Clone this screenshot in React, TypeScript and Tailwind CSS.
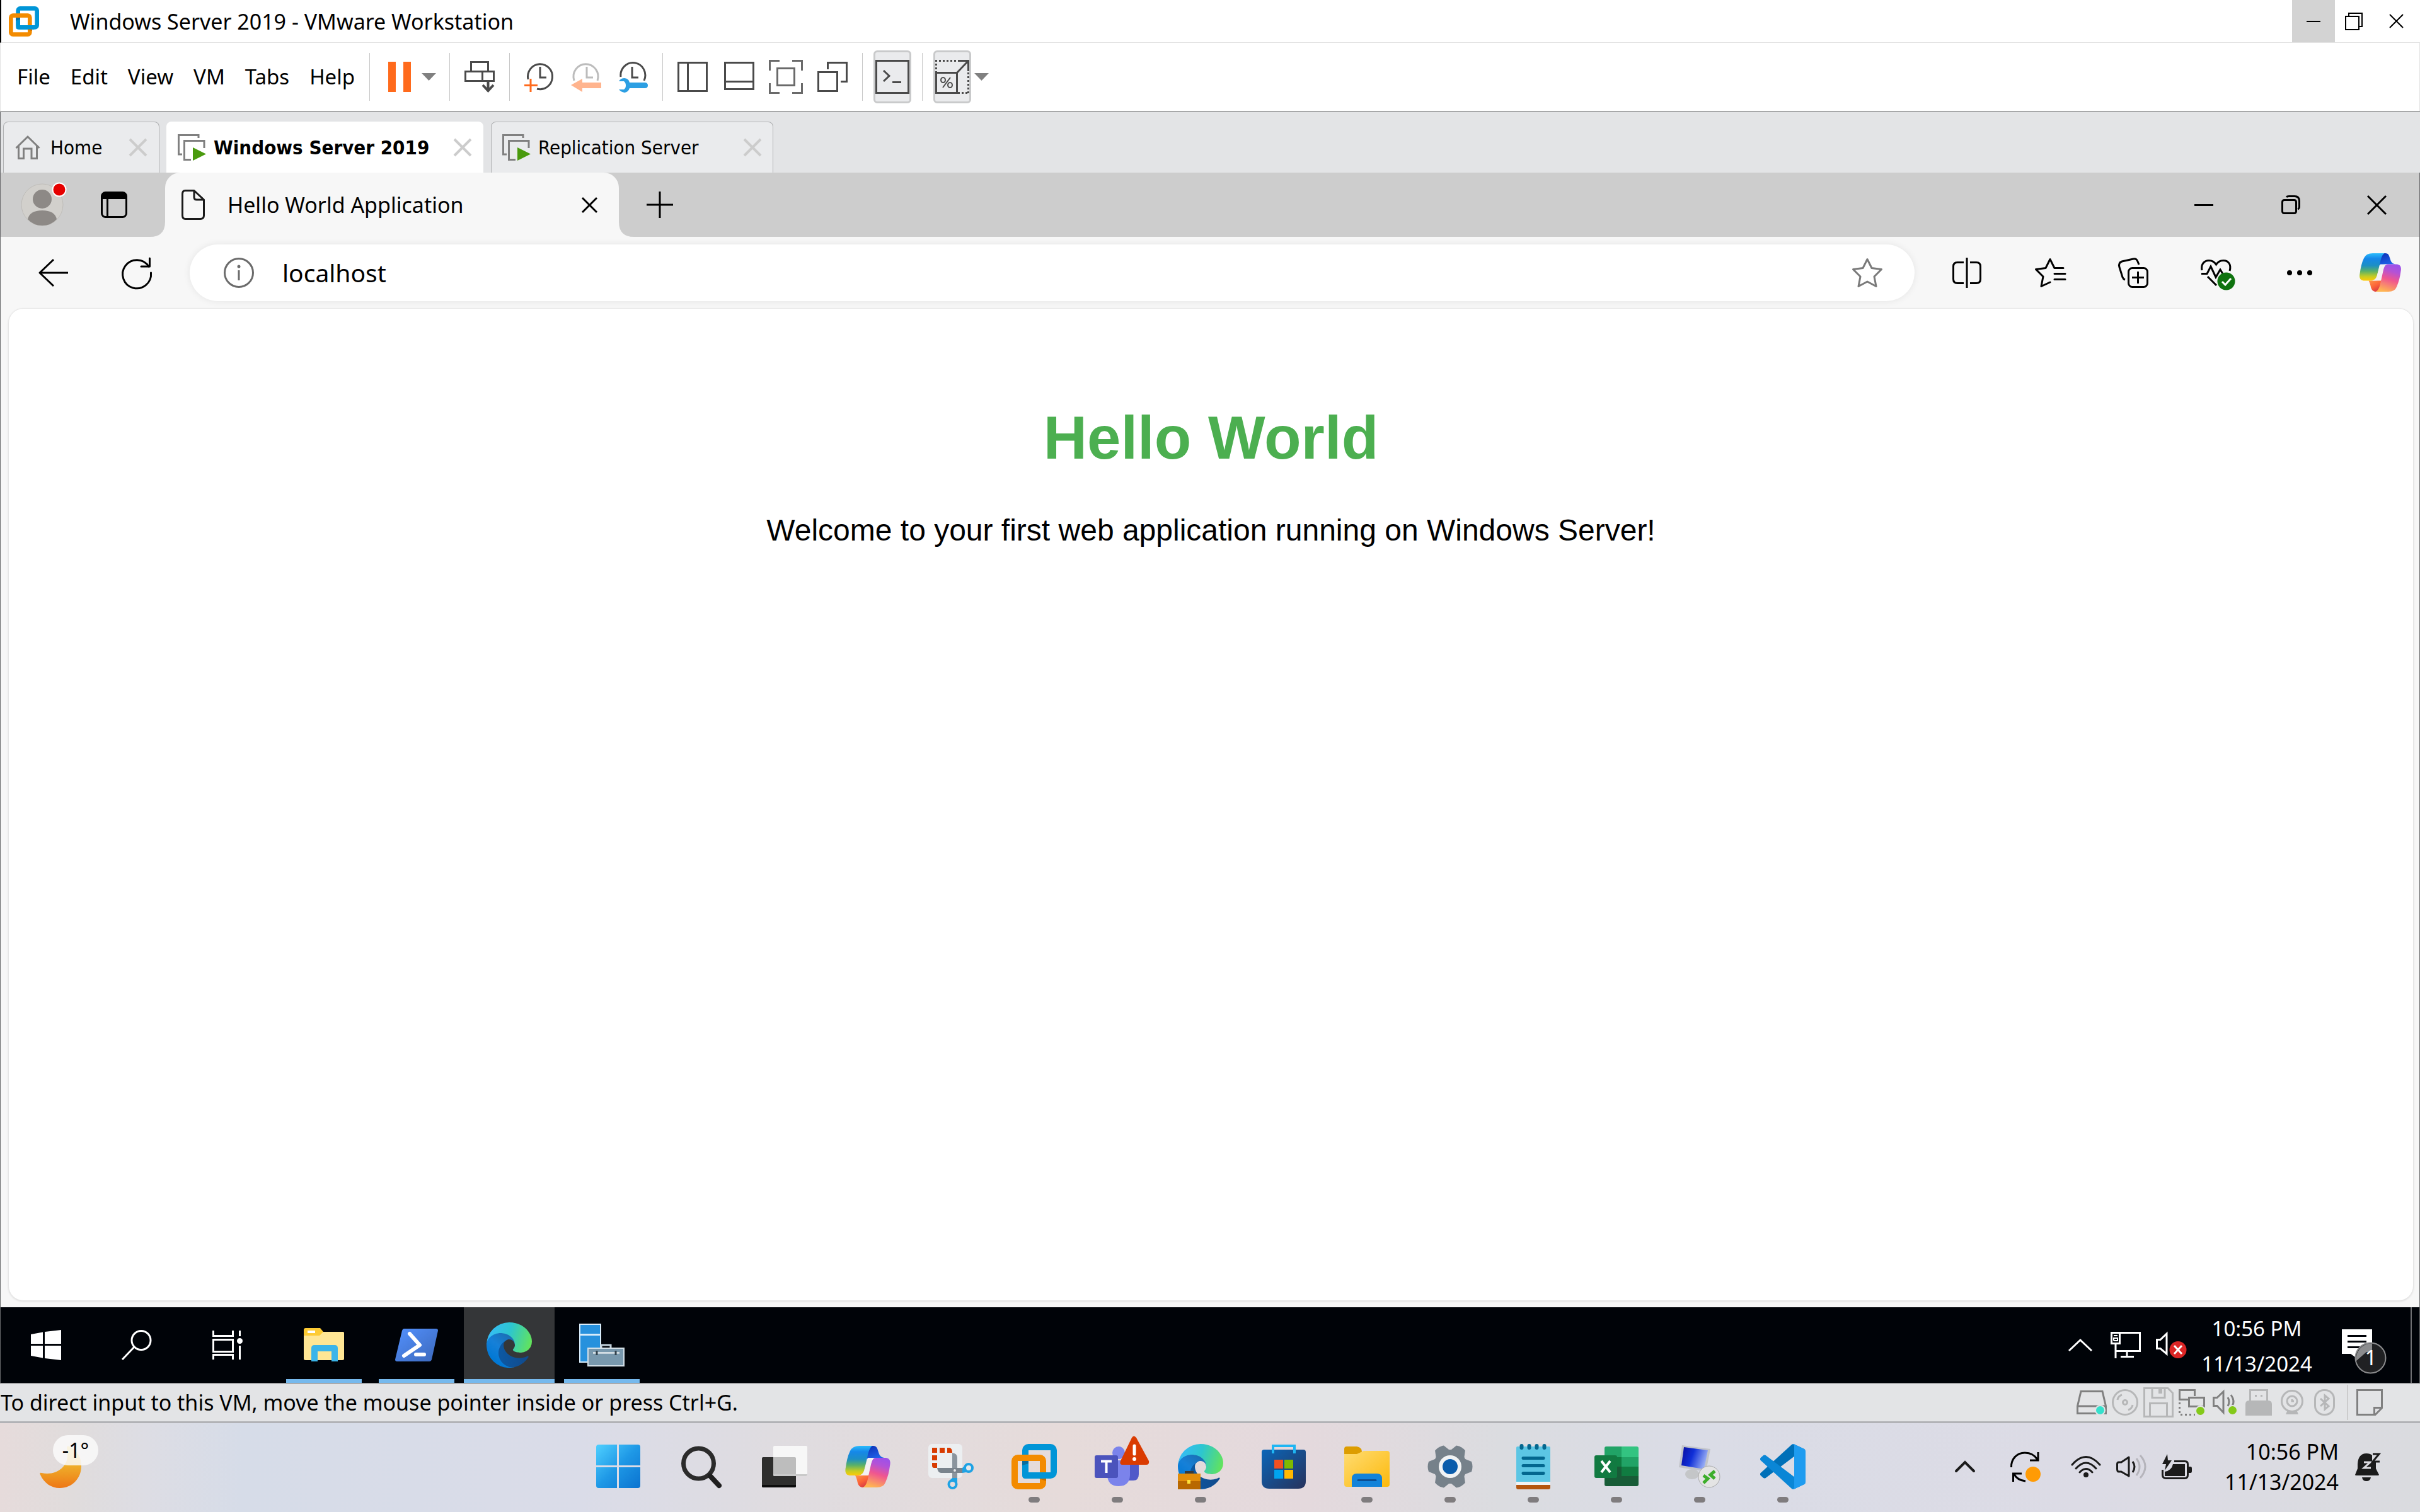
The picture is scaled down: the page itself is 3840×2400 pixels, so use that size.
import type { ReactNode } from "react";

const UI = "font-['Noto_Sans','Open_Sans',sans-serif]";

type IconProps = { w: number; h: number; children: ReactNode; className?: string };

function Icon({ w, h, children, className = "" }: IconProps) {
  return (
    <svg
      width={w}
      height={h}
      viewBox={`0 0 ${w} ${h}`}
      fill="none"
      aria-hidden="true"
      className={`shrink-0 overflow-visible ${className}`}
    >
      {children}
    </svg>
  );
}

/* ---------- shared logos ---------- */

function VmwareLogo({ size }: { size: number }) {
  return (
    <svg width={size} height={size} viewBox="0 0 72 72" fill="none" aria-hidden="true" className="shrink-0">
      <rect x="22" y="5" width="45" height="45" rx="5" stroke="#0095d7" strokeWidth="10" />
      <rect x="5" y="22" width="45" height="45" rx="5" stroke="#f38b00" strokeWidth="10" />
      <path d="M17 27H27V45H60V55H22Q17 55 17 50Z" fill="#0095d7" />
      <path d="M17 27H27V31L17 34Z" fill="#0b6d9e" />
      <path d="M44 55H55V59Z" fill="#c96f00" />
    </svg>
  );
}

function EdgeLogo({ size }: { size: number }) {
  return (
    <svg width={size} height={size} viewBox="0 0 256 256" aria-hidden="true" className="shrink-0">
      <defs>
        <linearGradient id="edgeA" x1="60" y1="177" x2="241" y2="177" gradientUnits="userSpaceOnUse">
          <stop offset="0" stopColor="#0c59a4" />
          <stop offset="1" stopColor="#114a8b" />
        </linearGradient>
        <linearGradient id="edgeB" x1="150" y1="90" x2="45" y2="220" gradientUnits="userSpaceOnUse">
          <stop offset="0" stopColor="#1b6fb4" />
          <stop offset="0.5" stopColor="#1680d8" />
          <stop offset="1" stopColor="#0078d4" />
        </linearGradient>
        <linearGradient id="edgeC" x1="20" y1="50" x2="250" y2="120" gradientUnits="userSpaceOnUse">
          <stop offset="0" stopColor="#35bdf3" />
          <stop offset="0.45" stopColor="#2dc6cf" />
          <stop offset="1" stopColor="#62e35c" />
        </linearGradient>
      </defs>
      <path
        fill="url(#edgeA)"
        d="M231 190.5c-3.4 1.8-6.9 3.4-10.5 4.7a101.5 101.5 0 0 1-35.9 6.4c-47.3 0-88.5-32.5-88.5-74.3a31.5 31.5 0 0 1 16.4-27.3c-42.8 1.8-53.8 46.4-53.8 72.5 0 73.9 68.1 81.4 82.8 81.4 7.9 0 19.8-2.3 27-4.6l1.3-.4a128.3 128.3 0 0 0 66.6-52.8 4 4 0 0 0-5.4-5.6z"
      />
      <path
        fill="url(#edgeB)"
        d="M105.7 241.4a79.2 79.2 0 0 1-22.7-21.3 80.7 80.7 0 0 1 29.5-120c3.2-1.5 8.4-4.1 15.5-4a32.4 32.4 0 0 1 25.7 13 31.9 31.9 0 0 1 6.3 18.7c0-.2 24.5-79.6-80-79.6-43.9 0-80 41.6-80 78.2 0 19.2 4.1 38.9 12.1 56.3a128 128 0 0 0 156.4 67 75.5 75.5 0 0 1-62.8-8.3z"
      />
      <path
        fill="url(#edgeC)"
        d="M152.3 148.9c-.9 1-3.4 2.5-3.4 5.6 0 2.6 1.7 5.2 4.8 7.3 14.3 10 41.4 8.6 41.5 8.6a59.6 59.6 0 0 0 30.3-8.3 61.4 61.4 0 0 0 30.4-52.9c.3-22.4-8-37.3-11.3-43.9C223.5 23.9 177.7 0 128 0A128 128 0 0 0 0 126.2c.5-36.5 36.8-66 80-66 3.5 0 23.5.3 42 10 16.3 8.6 24.9 19 30.8 29.2 6.2 10.7 7.3 24.1 7.3 29.5 0 5.3-2.7 13.3-7.8 19.9z"
      />
    </svg>
  );
}

function CopilotLogo({ w, h }: { w: number; h: number }) {
  return (
    <svg width={w} height={h} viewBox="0 0 72 66" aria-hidden="true" className="shrink-0">
      <defs>
        <linearGradient id="cpA" x1="0" y1="0" x2="0" y2="1">
          <stop offset="0" stopColor="#2bbcfb" />
          <stop offset="0.2" stopColor="#1587e9" />
          <stop offset="0.45" stopColor="#1d8fc4" />
          <stop offset="0.65" stopColor="#58b06a" />
          <stop offset="0.85" stopColor="#c6cc22" />
          <stop offset="1" stopColor="#fdcb08" />
        </linearGradient>
        <linearGradient id="cpB" x1="0.7" y1="0" x2="0.4" y2="1">
          <stop offset="0" stopColor="#9c51ea" />
          <stop offset="0.25" stopColor="#b452d6" />
          <stop offset="0.55" stopColor="#f0568f" />
          <stop offset="1" stopColor="#ffb552" />
        </linearGradient>
        <linearGradient id="cpC" x1="0" y1="0" x2="0.6" y2="1">
          <stop offset="0" stopColor="#ff9a4a" />
          <stop offset="0.6" stopColor="#fb6238" />
          <stop offset="1" stopColor="#d93a44" />
        </linearGradient>
        <linearGradient id="cpD" x1="0" y1="0" x2="0.5" y2="1">
          <stop offset="0" stopColor="#0b2fb4" />
          <stop offset="1" stopColor="#1f63ea" />
        </linearGradient>
      </defs>
      <path fill="url(#cpD)" d="M34 0H45C49 0 51 3 52 7L54 13Q56 18 62 19H47Q40 19 37 21L34 20Z" />
      <path fill="url(#cpC)" d="M34 46Q31 47 16 47Q18 50 20 59Q22 66 28 66H34L38 46Z" />
      <path fill="url(#cpA)" d="M23 0H43C39 3 37 9 35 19L31 36C29 44 26 47 18 47H9C2 47-1 43 1 34C2 26 4 16 8 8Q12 0 23 0Z" />
      <path fill="#f4f1f3" d="M36 19H49C45 19 43 22 41 30L37 47H22C27 46 30 43 31 36Z" />
      <path fill="url(#cpB)" d="M49 19H63C70 19 73 23 71 32C70 40 68 49 64 58Q61 66 50 66H28C33 64 35 58 37 48L41 30C43 22 45 19 49 19Z" />
    </svg>
  );
}

/* ---------- outer window ---------- */

function CloseX({ size, color, stroke }: { size: number; color: string; stroke: number }) {
  return (
    <Icon w={size} h={size}>
      <path d={`M1 1L${size - 1} ${size - 1}M${size - 1} 1L1 ${size - 1}`} stroke={color} strokeWidth={stroke} />
    </Icon>
  );
}

function TitleBar() {
  return (
    <header className="flex h-[68px] items-center border-b border-l-2 border-b-[#e3e3e3] border-l-black bg-white pl-3">
      <VmwareLogo size={48} />
      <h1 className="ml-[49px] text-[34px] leading-[48px]">Windows Server 2019 - VMware Workstation</h1>
      <div className="ml-auto flex h-full">
        <button aria-label="Minimize" className="flex w-[68px] items-center justify-center bg-[#d3d3d3]">
          <Icon w={24} h={24}>
            <path d="M1 12H23" stroke="#000" strokeWidth="2" />
          </Icon>
        </button>
        <button aria-label="Restore" className="flex w-[60px] items-center justify-center">
          <Icon w={28} h={28}>
            <path d="M1 6H22V27H1Z" stroke="#000" strokeWidth="2" />
            <path d="M6 6V1H27V22H22" stroke="#000" strokeWidth="2" />
          </Icon>
        </button>
        <button aria-label="Close" className="flex w-[75px] items-center justify-center">
          <CloseX size={23} color="#000" stroke={2} />
        </button>
      </div>
    </header>
  );
}

function Caret() {
  return (
    <Icon w={23} h={12}>
      <path d="M0 0H23L11.500 12Z" fill="#808080" />
    </Icon>
  );
}

const DARK = "#4a4a4a";

function MenuBar() {
  const group = "flex h-[76px] items-center gap-[26px] border-r border-[#c8c8c8] px-[23px]";
  return (
    <div className="flex h-[109px] items-center border-x border-b border-[#e3e3e3] bg-white">
      <nav className="flex h-[76px] w-[586px] shrink-0 items-center border-r border-[#c8c8c8] pl-[10px]">
        {["File", "Edit", "View", "VM", "Tabs", "Help"].map((m) => (
          <button key={m} className="px-4 text-[33px] leading-[48px]">
            {m}
          </button>
        ))}
      </nav>
      <div className="flex h-[76px] items-center gap-[17px] border-r border-[#c8c8c8] pr-[21px] pl-[29px]">
        <button aria-label="Suspend">
          <Icon w={36} h={48}>
            <path d="M0 0H12V48H0ZM24 0H36V48H24Z" fill="#ff6a1c" />
          </Icon>
        </button>
        <button aria-label="Power options">
          <Caret />
        </button>
      </div>
      <div className={group}>
        <button aria-label="Send Ctrl+Alt+Del">
          <Icon w={48} h={50}>
            <path d="M10.500 15V1.500H37.500V15M1.500 16.500H46.500V31.500H1.500ZM28.500 16V31" stroke={DARK} strokeWidth="3" />
            <path d="M37.500 32V47M29 38L37.500 47L46 38" stroke={DARK} strokeWidth="4" />
          </Icon>
        </button>
      </div>
      <div className={group}>
        <button aria-label="Take snapshot">
          <Icon w={48} h={48}>
            <path d="M6 28A19.500 20 0 1 1 20 43" stroke={DARK} strokeWidth="3" />
            <path d="M25 8V25H35" stroke={DARK} strokeWidth="3" />
            <path d="M10 27V48M0 37.500H21" stroke="#ff6a1c" strokeWidth="3" />
          </Icon>
        </button>
        <button aria-label="Revert to snapshot" disabled>
          <Icon w={48} h={48}>
            <path d="M5 30A19.500 20 0 1 1 42 30" stroke="#bcbcbc" strokeWidth="3" />
            <path d="M25 8V25H35" stroke="#bcbcbc" strokeWidth="3" />
            <path d="M0 37L18 27V33H48V42H18V48Z" fill="#ffb48e" />
          </Icon>
        </button>
        <button aria-label="Manage snapshots">
          <Icon w={48} h={48}>
            <path d="M5 24A19.500 20 0 1 1 42 30" stroke={DARK} strokeWidth="3" />
            <path d="M23 8V25H33" stroke={DARK} strokeWidth="3" />
            <path
              d="M2 31Q5 26 11 26Q18 27 19 33H43Q48 33 48 37.500T43 42H19Q17 48 11 49Q5 48 2 44H10Q13 42 13 37.500T10 31Z"
              fill="#2c9fe3"
            />
          </Icon>
        </button>
      </div>
      <div className={group}>
        <button aria-label="Show library">
          <Icon w={48} h={48}>
            <path d="M1.500 1.500H46.500V46.500H1.500ZM16.500 2V46" stroke={DARK} strokeWidth="3" />
          </Icon>
        </button>
        <button aria-label="Show thumbnail bar">
          <Icon w={48} h={48}>
            <path d="M1.500 1.500H46.500V43.500H1.500ZM2 31.500H46" stroke={DARK} strokeWidth="3" />
          </Icon>
        </button>
        <button aria-label="Full screen" className="-mx-[3px]">
          <Icon w={54} h={54}>
            <path
              d="M1.500 17V1.500H17M37 1.500H52.500V17M52.500 37V52.500H37M17 52.500H1.500V37M13.500 13.500H40.500V40.500H13.500Z"
              stroke="#6a6a6a"
              strokeWidth="3"
            />
          </Icon>
        </button>
        <button aria-label="Unity">
          <Icon w={48} h={48}>
            <path d="M1.500 16.500H31.500V46.500H1.500ZM16.500 12V1.500H46.500V31.500H37" stroke={DARK} strokeWidth="3" />
          </Icon>
        </button>
      </div>
      <div className="flex h-[76px] items-center border-r border-[#c8c8c8] px-[17px]">
        <button
          aria-label="Console view"
          className="flex h-[84px] w-[60px] items-center justify-center rounded-[6px] border-3 border-[#c9cacb] bg-[#eaebed]"
        >
          <Icon w={54} h={54}>
            <path d="M1.500 1.500H52.500V52.500H1.500Z" stroke={DARK} strokeWidth="3" />
            <path d="M13 17L22 25.500L13 34M27 35.500H41" stroke={DARK} strokeWidth="3" />
          </Icon>
        </button>
      </div>
      <div className="flex items-center gap-[5px] pl-[17px]">
        <button
          aria-label="Stretch guest"
          className="flex h-[84px] w-[60px] items-center justify-center rounded-[6px] border-3 border-[#c9cacb] bg-[#eaebed]"
        >
          <Icon w={54} h={54}>
            <path d="M1.500 20.500H34.500V52.500H1.500ZM34.500 20.500L52 2" stroke={DARK} strokeWidth="3" />
            <path d="M0 1.500H36M1.500 0V20M52.500 20V54M36 52.500H54" stroke={DARK} strokeWidth="3" strokeDasharray="3 3" />
            <path d="M36 1.500H52.500V18" stroke={DARK} strokeWidth="3" />
            <path d="M24 28L12 44" stroke={DARK} strokeWidth="2" />
            <ellipse cx="12.500" cy="32" rx="3.500" ry="4" stroke={DARK} strokeWidth="2" />
            <ellipse cx="23.500" cy="40" rx="3.500" ry="4" stroke={DARK} strokeWidth="2" />
          </Icon>
        </button>
        <button aria-label="Stretch options">
          <Caret />
        </button>
      </div>
    </div>
  );
}

function VmTabIcon() {
  return (
    <Icon w={45} h={42}>
      <path d="M33 6V1.500H1.500V32H7M42 22V10.500H10.500V40.500H21" stroke="#808080" strokeWidth="3" />
      <path d="M24 21L45 31.500L24 42Z" fill="#4a9a0e" />
    </Icon>
  );
}

function VmTabs() {
  const base = "flex h-[81px] items-center border border-b-0 border-[#b0b1b3] text-[31px] leading-[40px]";
  const idle = "bg-[#eaebed]";
  return (
    <div className="flex h-[97px] items-end border-t border-l border-[#68696b] bg-[#e3e4e6] pl-1 font-['DejaVu_Sans_Condensed','DejaVu_Sans',sans-serif]">
      <div className={`${base} ${idle} w-[248px] rounded-t-[8px] pr-[19px] pl-[18px]`}>
        <Icon w={40} h={38}>
          <path d="M1.500 20L20 2L38.500 20M5.500 17V36.500H13.500V21H26V36.500H34.500V17" stroke="#808080" strokeWidth="3" />
        </Icon>
        <button className="ml-4">Home</button>
        <button aria-label="Close Home" className="ml-auto">
          <CloseX size={28} color="#cccccc" stroke={4} />
        </button>
      </div>
      <div className={`${base} ml-[11px] w-[503px] rounded-t-[8px] border-white bg-white pr-[18px] pl-[17px]`}>
        <VmTabIcon />
        <button className="ml-3 font-bold">Windows Server 2019</button>
        <button aria-label="Close Windows Server 2019" className="ml-auto">
          <CloseX size={28} color="#cccccc" stroke={4} />
        </button>
      </div>
      <div className={`${base} ${idle} ml-[12px] w-[448px] rounded-t-[8px] pr-[18px] pl-[17px]`}>
        <VmTabIcon />
        <button className="ml-3">Replication Server</button>
        <button aria-label="Close Replication Server" className="ml-auto">
          <CloseX size={28} color="#cccccc" stroke={4} />
        </button>
      </div>
    </div>
  );
}

/* ---------- browser inside the guest ---------- */

function BrowserTabs() {
  return (
    <div className="flex h-[102px] items-center bg-[#cdcdcd] pl-[33px]">
      <button aria-label="Profile">
        <Icon w={72} h={68}>
          <circle cx="33" cy="34" r="33" fill="#d2d0cc" stroke="#bfbdb9" />
          <circle cx="33" cy="25" r="15" fill="#8d8986" />
          <path d="M10 57Q13 43 33 43T56 57Q47 67 33 67T10 57Z" fill="#8d8986" />
          <circle cx="60" cy="10" r="10.500" fill="#e60000" stroke="#fff" strokeWidth="2" />
        </Icon>
      </button>
      <button aria-label="Workspaces" className="ml-[54px]">
        <Icon w={42} h={42}>
          <rect x="1.500" y="1.500" width="39" height="39" rx="6" stroke="#000" strokeWidth="3" />
          <path d="M1 12V7Q1 1 7 1H35Q41 1 41 7V12Z" fill="#000" />
          <path d="M10.500 12V41" stroke="#000" strokeWidth="3" />
        </Icon>
      </button>
      <Icon w={24} h={24} className="ml-[36px] self-end">
        <path d="M24 0V24H0Q24 24 24 0Z" fill="#f7f7f7" />
      </Icon>
      <div className="flex h-full w-[720px] items-center rounded-t-[24px] bg-[#f7f7f7] pr-[34px] pl-[26px]">
        <Icon w={37} h={48}>
          <path
            d="M6 1.500H20L35.500 16V41Q35.500 46.500 30 46.500H6Q1.500 46.500 1.500 41V7Q1.500 1.500 6 1.500ZM20 2V12Q20 16 24 16H35"
            stroke="#1a1a1a"
            strokeWidth="3"
            strokeLinejoin="round"
          />
        </Icon>
        <button className="ml-9 text-[34px] leading-[48px]">Hello World Application</button>
        <button aria-label="Close tab" className="ml-auto">
          <CloseX size={25} color="#000" stroke={3} />
        </button>
      </div>
      <Icon w={24} h={24} className="self-end">
        <path d="M0 0V24H24Q0 24 0 0Z" fill="#f7f7f7" />
      </Icon>
      <button aria-label="New tab" className="ml-[20px]">
        <Icon w={42} h={42}>
          <path d="M21 0V42M0 21H42" stroke="#000" strokeWidth="3" />
        </Icon>
      </button>
      <div className="ml-auto flex h-full">
        <button aria-label="Minimize browser" className="flex w-[138px] items-center justify-center">
          <Icon w={30} h={30}>
            <path d="M0 15.500H30" stroke="#000" strokeWidth="3" />
          </Icon>
        </button>
        <button aria-label="Restore browser" className="flex w-[138px] items-center justify-center">
          <Icon w={30} h={30}>
            <rect x="1.500" y="7.500" width="22" height="21" rx="3" stroke="#000" strokeWidth="3" />
            <path d="M8 3Q9 1.500 12 1.500H21Q28.500 1.500 28.500 9V18Q28.500 21 26 22" stroke="#000" strokeWidth="3" />
          </Icon>
        </button>
        <button aria-label="Close browser" className="flex w-[135px] items-center justify-center">
          <CloseX size={31} color="#000" stroke={3} />
        </button>
      </div>
    </div>
  );
}

function BrowserToolbar() {
  const slot = "flex h-full w-[132px] items-center justify-center";
  return (
    <div className="flex h-[113px] items-center pl-[60px]">
      <button aria-label="Back">
        <Icon w={48} h={44}>
          <path d="M24 1L2 22L24 43M2 22H47" stroke="#000" strokeWidth="3" strokeLinejoin="round" />
        </Icon>
      </button>
      <button aria-label="Refresh" className="ml-[84px]">
        <Icon w={48} h={48}>
          <path d="M43 14A22.500 22.500 0 1 0 46.500 24" stroke="#000" strokeWidth="3" strokeLinecap="round" />
          <path d="M44.500 1V14H31" stroke="#000" strokeWidth="3" strokeLinejoin="round" strokeLinecap="round" />
        </Icon>
      </button>
      <div className="ml-[60px] flex h-[90px] min-w-0 flex-1 items-center rounded-full bg-white pr-[51px] pl-[54px] shadow-[0_0_12px_rgba(0,0,0,0.08)]">
        <Icon w={48} h={48}>
          <circle cx="24" cy="24" r="22.500" stroke="#6b6b6b" strokeWidth="3" />
          <circle cx="24" cy="14" r="2.500" fill="#6b6b6b" />
          <path d="M24 20V36" stroke="#6b6b6b" strokeWidth="3" />
        </Icon>
        <input
          aria-label="Address"
          defaultValue="localhost"
          className="ml-[45px] min-w-0 flex-1 bg-transparent text-[39px] leading-[56px] outline-none"
        />
        <button aria-label="Add to favorites">
          <Icon w={48} h={46}>
            <path
              d="M24 1.500L31 15.500L46.500 17.500L35 29L38 44.500L24 37L10 44.500L13 29L1.500 17.500L17 15.500Z"
              stroke="#7a7a7a"
              strokeWidth="3"
              strokeLinejoin="round"
            />
          </Icon>
        </button>
      </div>
      <div className="ml-[17px] flex h-full items-center">
        <button aria-label="Split screen" className={slot}>
          <Icon w={46} h={48}>
            <path
              d="M18 7.500H8Q1.500 7.500 1.500 14V34Q1.500 40.500 8 40.500H18M28 7.500H38Q44.500 7.500 44.500 14V34Q44.500 40.500 38 40.500H28M23 0V48"
              stroke="#000"
              strokeWidth="3"
            />
          </Icon>
        </button>
        <button aria-label="Favorites" className={slot}>
          <Icon w={49} h={46}>
            <path
              d="M45 15.500H31L24 1.500L17 15.500L1.500 17.500L13 29L10 44.500L24 38M31 24.500H48M31 33.500H48"
              stroke="#000"
              strokeWidth="3"
              strokeLinejoin="round"
              strokeLinecap="round"
            />
          </Icon>
        </button>
        <button aria-label="Collections" className={slot}>
          <Icon w={48} h={48}>
            <rect x="16.500" y="16.500" width="30" height="30" rx="6" stroke="#000" strokeWidth="3" />
            <path d="M31.500 22V41M22 31.500H41" stroke="#000" strokeWidth="3" />
            <path d="M11 35Q8 34 7 31L2 15Q0 8 6 6L24 2Q29 1 31 6L33 11" stroke="#000" strokeWidth="3" />
          </Icon>
        </button>
        <button aria-label="Browser essentials" className={slot}>
          <Icon w={50} h={42}>
            <path
              d="M2 17C0 7 6 1.500 13 1.500C19 1.500 22 4 24.500 8C27 4 30 1.500 36 1.500C44 1.500 49 8 46 18M1 22.500H10L16 11L24 28L31 16L36 24M11 27L25 41"
              stroke="#000"
              strokeWidth="3"
            />
            <circle cx="40.500" cy="34.500" r="14" fill="#0f730f" />
            <path d="M34 35L39 40L48 30" stroke="#fff" strokeWidth="3" />
          </Icon>
        </button>
        <button aria-label="Settings and more" className={slot}>
          <Icon w={40} h={8}>
            <circle cx="4" cy="4" r="4" fill="#000" />
            <circle cx="20" cy="4" r="4" fill="#000" />
            <circle cx="36" cy="4" r="4" fill="#000" />
          </Icon>
        </button>
        <button aria-label="Copilot" className="flex h-full w-[124px] items-center justify-center">
          <CopilotLogo w={68} h={61} />
        </button>
      </div>
    </div>
  );
}

function WebPage() {
  return (
    <main className="mr-[9px] mb-[10px] ml-[12px] flex-1 rounded-[24px] border border-[#e6e6e6] bg-white pt-[150px] text-center font-['Liberation_Sans',Arial,sans-serif] shadow-[0_1px_3px_rgba(0,0,0,0.1)]">
      <h1 className="text-[96px] leading-[110px] font-bold text-[#4caf50]">Hello World</h1>
      <p className="mt-16 text-[48px] leading-[55px]">
        Welcome to your first web application running on Windows Server!
      </p>
    </main>
  );
}

function GuestTaskbar() {
  const slot = "flex h-full w-[144px] items-center justify-center";
  const app = "flex h-full w-[144px] flex-col items-center";
  return (
    <div className="flex h-[121px] items-center border-b border-[#68696b] bg-[#000308] text-white">
      <button aria-label="Start" className={slot}>
        <Icon w={48} h={48}>
          <path d="M0 7L19 3.500V22H0ZM22 3L48 0V22H22ZM0 25H19V44.500L0 41ZM22 25H48V48L22 45Z" fill="#fff" />
        </Icon>
      </button>
      <button aria-label="Search" className={slot}>
        <Icon w={48} h={48}>
          <circle cx="31" cy="16.500" r="15" stroke="#fff" strokeWidth="3" />
          <path d="M20 27L1 47" stroke="#fff" strokeWidth="3" />
        </Icon>
      </button>
      <button aria-label="Task view" className={slot}>
        <Icon w={48} h={46}>
          <path
            d="M1.500 0V8.500H32.500V0M1.500 46V38.500H32.500V46M1.500 14.500H32.500V33.500H1.500ZM43.500 0V9M43.500 24V46"
            stroke="#fff"
            strokeWidth="3"
          />
          <circle cx="43.500" cy="16.500" r="4.500" fill="#fff" />
        </Icon>
      </button>
      <div className="ml-[9px] flex h-full gap-[3px]">
        <button aria-label="File Explorer" className={app}>
          <span className="flex flex-1 items-center pt-[6px]">
            <Icon w={64} h={54}>
              <path d="M0 3Q0 0 3 0H26L31 6H62Q64 6 64 9V50H0Z" fill="#fdcb34" />
              <path d="M0 12H25L31 6H62Q64 6 64 9V48Q64 51 61 51H3Q0 51 0 48Z" fill="#ffe694" />
              <path d="M6 4H18V8H6Z" fill="#fff" />
              <path d="M12 53V32Q12 27 17 27H49Q54 27 54 32V53H44V37H22V53Z" fill="#3ab4e9" />
            </Icon>
          </span>
          <span className="h-[6px] w-[120px] bg-[#76b9ed]" />
        </button>
        <button aria-label="PowerShell" className={app}>
          <span className="flex flex-1 items-center pt-[6px]">
            <Icon w={68} h={52}>
              <defs>
                <linearGradient id="ps" x1="0" y1="0" x2="1" y2="1">
                  <stop offset="0" stopColor="#5391fe" />
                  <stop offset="1" stopColor="#3b68bb" />
                </linearGradient>
              </defs>
              <path d="M14 0H65Q68 0 68 3L58 49Q57 52 54 52H3Q0 52 0 49L11 3Q12 0 14 0Z" fill="url(#ps)" />
              <path d="M23 8L39 26L14 43" stroke="#fff" strokeWidth="6" strokeLinecap="round" strokeLinejoin="round" />
              <path d="M33 41H46" stroke="#fff" strokeWidth="6" strokeLinecap="round" />
            </Icon>
          </span>
          <span className="h-[6px] w-[120px] bg-[#76b9ed]" />
        </button>
        <button aria-label="Microsoft Edge" className={`${app} bg-[#343638]`}>
          <span className="flex flex-1 items-center pt-[6px]">
            <EdgeLogo size={72} />
          </span>
          <span className="h-[6px] w-full bg-[#76b9ed]" />
        </button>
        <button aria-label="Server Manager" className={app}>
          <span className="flex flex-1 items-center pt-[6px]">
            <Icon w={72} h={68}>
              <path d="M1 1H34V61H1Z" fill="#2791dd" stroke="#d8ecfa" strokeWidth="2" />
              <path d="M1 17.500H34" stroke="#d8ecfa" strokeWidth="3" />
              <path d="M35 38V34H50V38" stroke="#c3d2dc" strokeWidth="3" />
              <path d="M14 39H71V67H14Z" fill="#7898ad" stroke="#d3dfe7" strokeWidth="2" />
              <path d="M22 46.500H64" stroke="#fff" strokeWidth="2" />
              <path d="M28 43V50M58 43V50" stroke="#33424d" strokeWidth="3" />
            </Icon>
          </span>
          <span className="h-[6px] w-[120px] bg-[#76b9ed]" />
        </button>
      </div>
      <div className="ml-auto flex h-full items-center pr-[12px]">
        <button aria-label="Show hidden icons">
          <Icon w={38} h={20}>
            <path d="M1 19L19 2L37 19" stroke="#fff" strokeWidth="3" />
          </Icon>
        </button>
        <Icon w={48} h={42} className="ml-[29px]">
          <path d="M14 1.500H46.500V30.500H9M1.500 1.500H14.500V18.500H1.500ZM8 18V42M26 31V38M16 39.500H37" stroke="#fff" strokeWidth="3" />
          <path d="M5 6H11M5 14V10H11V14H5" stroke="#fff" strokeWidth="2" />
        </Icon>
        <Icon w={48} h={42} className="ml-[24px]">
          <path d="M1.500 12.500H7L17 3V35L7 26.500H1.500Z" stroke="#fff" strokeWidth="3" />
          <circle cx="35" cy="28.500" r="13.500" fill="#dc2626" />
          <path d="M29 22L41 35M41 22L29 35" stroke="#fff" strokeWidth="3" />
        </Icon>
        <button className="ml-[20px] w-[184px] pt-[3px] text-center text-[33px] leading-[56px]">
          10:56 PM
          <br />
          11/13/2024
        </button>
        <button aria-label="Notifications, 1 new" className="relative mt-[22px] ml-[43px] h-[72px] w-[72px]">
          <Icon w={72} h={72}>
            <path d="M0 0H48V39H28V49L14 39H0Z" fill="#fff" />
            <path d="M9 10.500H39M9 19.500H39M9 28.500H39" stroke="#000308" strokeWidth="3" />
            <circle cx="45.500" cy="45.500" r="24" fill="#202123" stroke="#8b8c8e" strokeWidth="2" />
            <path d="M23 50A24 24 0 0 1 45 22.500H48V36H39L23 50Z" fill="#8b8c8e" />
          </Icon>
          <span className="absolute top-[19px] left-[20px] w-[52px] text-center text-[33px] leading-[52px]">1</span>
        </button>
        <span className="ml-[37px] h-full w-[2px] bg-[#6f7073]" />
      </div>
    </div>
  );
}

function StatusBar() {
  const g = "#808080";
  const l = "#b6b7b8";
  return (
    <div className="flex h-[63px] items-center border-b-3 border-[#b1b2b6] bg-[#e3e4e6]">
      <p className="pl-px text-[34px] leading-[48px]">
        To direct input to this VM, move the mouse pointer inside or press Ctrl+G.
      </p>
      <div className="ml-auto flex h-full items-center gap-2 pr-[59px]">
        <Icon w={48} h={38}>
          <path d="M1.500 36.500V25L7 1.500H41L46.500 25V36.500ZM2 25H46" stroke={g} strokeWidth="3" />
          <circle cx="37.500" cy="31.500" r="7.500" fill="#36e0cc" stroke="#e3e4e6" strokeWidth="2" />
        </Icon>
        <Icon w={42} h={42}>
          <circle cx="21" cy="21" r="19.500" stroke={l} strokeWidth="3" />
          <circle cx="21" cy="21" r="3.500" stroke={l} strokeWidth="3" />
          <path d="M9 17Q10 11 16 9M33 25Q32 31 26 33" stroke={l} strokeWidth="3" />
        </Icon>
        <Icon w={48} h={48}>
          <path d="M1.500 1.500H39L46.500 9V46.500H1.500ZM14 2V16.500H34V2M10.500 46V25.500H37.500V46" stroke={l} strokeWidth="3" />
          <path d="M24 3H30V10H24Z" fill={l} />
        </Icon>
        <Icon w={42} h={42}>
          <path d="M15 16.500H1.500V1.500H25.500V11M16.500 13.500H40.500V27.500H16.500Z" stroke={g} strokeWidth="3" />
          <path d="M1.500 21V41M3 40.500H26" stroke={g} strokeWidth="3" strokeDasharray="3 4" />
          <circle cx="34.500" cy="34.500" r="7.500" fill="#84c91a" stroke="#e3e4e6" strokeWidth="2" />
        </Icon>
        <Icon w={40} h={40} className="ml-1">
          <path d="M1.500 12.500H7L17 3V36L7 25.500H1.500Z" stroke={g} strokeWidth="3" />
          <path d="M24 12Q28 19 24 26M29 8Q36 18 31 26" stroke={g} strokeWidth="3" />
          <circle cx="31.500" cy="32.500" r="7.500" fill="#84c91a" stroke="#e3e4e6" strokeWidth="2" />
        </Icon>
        <Icon w={42} h={42} className="ml-1">
          <path d="M7.500 20V1.500H34.500V20" stroke={l} strokeWidth="3" />
          <path d="M0 24Q0 18 6 18H36Q42 18 42 24V42H0Z" fill={l} />
          <path d="M15 9H18V12H15ZM24 9H27V12H24Z" fill={l} />
        </Icon>
        <Icon w={36} h={40} className="ml-[6px]">
          <circle cx="18" cy="18" r="16.500" stroke={l} strokeWidth="3" />
          <circle cx="18" cy="18" r="8" stroke={l} strokeWidth="3" />
          <path d="M18 15V18H21" stroke={l} strokeWidth="3" />
          <path d="M10 34H26L28 39H8Z" fill={l} />
        </Icon>
        <Icon w={33} h={42} className="ml-[9px]">
          <rect x="1.500" y="1.500" width="30" height="39" rx="14" stroke={l} strokeWidth="3" />
          <path d="M10 15L23 27L17 32V10L23 15L10 27" stroke={l} strokeWidth="3" />
        </Icon>
        <span className="ml-[11px] h-[56px] w-[2px] border-r border-l border-r-white border-l-[#a0a1a3]" />
        <button aria-label="Message log" className="ml-[5px]">
          <Icon w={42} h={42}>
            <path d="M1.500 1.500H40.500V30L30 40.500H1.500ZM28.500 40V29.500H40" stroke={g} strokeWidth="3" />
          </Icon>
        </button>
      </div>
    </div>
  );
}

/* ---------- host taskbar ---------- */

const hostApps: { name: string; running: boolean; icon: ReactNode }[] = [
  {
    name: "Start",
    running: false,
    icon: (
      <Icon w={70} h={70}>
        <defs>
          <linearGradient id="win" x1="0" y1="0" x2="70" y2="70" gradientUnits="userSpaceOnUse">
            <stop offset="0" stopColor="#4fd0ff" />
            <stop offset="0.5" stopColor="#1e98e6" />
            <stop offset="1" stopColor="#0a72cf" />
          </linearGradient>
        </defs>
        <path
          d="M4 0H33V33H0V4Q0 0 4 0ZM36 0H66Q70 0 70 4V33H36ZM0 36H33V69H4Q0 69 0 65ZM36 36H70V65Q70 69 66 69H36Z"
          fill="url(#win)"
        />
      </Icon>
    ),
  },
  {
    name: "Search",
    running: false,
    icon: (
      <Icon w={64} h={67}>
        <circle cx="27.500" cy="28" r="24" stroke="#2b2b2b" strokeWidth="7" />
        <path d="M46 48L60 63" stroke="#1f1f1f" strokeWidth="8" strokeLinecap="round" />
      </Icon>
    ),
  },
  {
    name: "Task view",
    running: false,
    icon: (
      <Icon w={72} h={66}>
        <rect y="18" width="54" height="48" rx="2" fill="#2e2e2d" />
        <path d="M0 62H54V64Q54 66 52 66H2Q0 66 0 64Z" fill="#0c0c0c" />
        <rect x="18" width="54" height="48" rx="2" fill="#f7f7f7" />
        <path d="M18 18H52Q54 18 54 20V46H20Q18 46 18 44Z" fill="#bdbdbd" />
        <path d="M18 45H72V46Q72 48 70 48H20Q18 48 18 46Z" fill="#c9c9c9" />
      </Icon>
    ),
  },
  { name: "Copilot", running: false, icon: <CopilotLogo w={72} h={66} /> },
  {
    name: "Snipping Tool",
    running: false,
    icon: (
      <Icon w={72} h={72}>
        <rect width="54" height="54" rx="6" fill="#eceff1" />
        <path d="M6 14V6H14V14ZM18 6H26V14H18ZM30 6H34Q38 7 38 14H30ZM6 18H14V26H6ZM6 30H14V38H9Q6 38 6 34Z" fill="#d83b01" />
        <path d="M38 14Q46 15 46 22V54H38Z" fill="#8b959e" />
        <path d="M14 38H54V46H20Q15 45 14 38Z" fill="#7a848d" />
        <circle cx="42" cy="42" r="2" fill="#e6e8ea" />
        <path d="M54 46V38L60 33V45ZM38 54H46V66L33 59Z" fill="#1ea2e4" />
        <circle cx="64" cy="38" r="6" fill="#e6e8ea" stroke="#1ea2e4" strokeWidth="4" />
        <circle cx="38.500" cy="64" r="6" fill="#e3dcdd" stroke="#1ea2e4" strokeWidth="4" />
      </Icon>
    ),
  },
  { name: "VMware Workstation", running: true, icon: <VmwareLogo size={72} /> },
  {
    name: "Teams",
    running: true,
    icon: (
      <Icon w={72} h={72}>
        <circle cx="38" cy="14" r="10" fill="#7b83eb" />
        <path d="M52 26H70V48Q70 58 61 58H54Z" fill="#5059c9" />
        <path d="M20 26H56V50Q55 67 38 67T20 50Z" fill="#7b83eb" />
        <rect y="18" width="37" height="36" rx="3" fill="#4b53bc" />
        <path d="M10 27.500H27M18.500 27V46" stroke="#fff" strokeWidth="4" />
        <path d="M59 -10Q62 -15 66 -10L86 27Q87 33 82 33H44Q39 33 41 27Z" fill="#da3b01" />
        <path d="M63 3V16" stroke="#fff" strokeWidth="5" strokeLinecap="round" />
        <circle cx="63" cy="24" r="3" fill="#fff" />
      </Icon>
    ),
  },
  {
    name: "Microsoft Edge",
    running: true,
    icon: (
      <span className="relative block h-[72px] w-[72px]">
        <EdgeLogo size={72} />
        <svg width="36" height="29" viewBox="0 0 36 29" fill="none" aria-hidden="true" className="absolute bottom-0 left-0">
          <path d="M13 5V2H23V5" stroke="#3a3a3a" strokeWidth="4" />
          <rect y="4" width="36" height="25" fill="#b86800" />
          <rect y="4" width="36" height="12" fill="#e28d0a" />
          <rect x="15" y="14" width="5" height="6" fill="#ffe23a" />
        </svg>
      </span>
    ),
  },
  {
    name: "Microsoft Store",
    running: false,
    icon: (
      <Icon w={70} h={70}>
        <defs>
          <linearGradient id="store" x1="0" y1="0" x2="1" y2="1">
            <stop offset="0" stopColor="#0a66b8" />
            <stop offset="1" stopColor="#27325c" />
          </linearGradient>
        </defs>
        <path d="M0 12Q0 8 4 8H66Q70 8 70 12V58Q70 70 58 70H12Q0 70 0 58Z" fill="url(#store)" />
        <path d="M18 14V2H52V14" stroke="#1fb6f3" strokeWidth="4" />
        <path d="M20 24H34V38H20Z" fill="#f25022" />
        <path d="M36 24H50V38H36Z" fill="#7fba00" />
        <path d="M20 40H34V54H20Z" fill="#00a4ef" />
        <path d="M36 40H50V54H36Z" fill="#ffb900" />
      </Icon>
    ),
  },
  {
    name: "File Explorer",
    running: true,
    icon: (
      <Icon w={72} h={64}>
        <defs>
          <linearGradient id="fold" x1="0" y1="0" x2="1" y2="1">
            <stop offset="0" stopColor="#ffdc72" />
            <stop offset="1" stopColor="#fcb90c" />
          </linearGradient>
        </defs>
        <path d="M0 4Q0 0 4 0H20Q29 1 28 12H0Z" fill="#dd9d00" />
        <path d="M0 12H20L31 7H68Q72 7 72 11V60Q72 64 68 64H4Q0 64 0 60Z" fill="url(#fold)" />
        <path d="M12 64V51Q12 43 20 43H52Q60 43 60 51V64Z" fill="#1383d9" />
        <path d="M22 53.500H50" stroke="#0c4f94" strokeWidth="3" strokeLinecap="round" />
      </Icon>
    ),
  },
  {
    name: "Settings",
    running: true,
    icon: (
      <Icon w={72} h={72}>
        <g fill="#76818a">
          <circle cx="36" cy="36" r="27" />
          {[0, 60, 120].map((a) => (
            <path key={a} transform={`rotate(${a} 36 36)`} d="M12 24L2 28Q-1 36 2 44L12 48H60L70 44Q73 36 70 28L60 24Z" />
          ))}
        </g>
        <circle cx="36" cy="36" r="18" fill="#f1f3f4" />
        <circle cx="36" cy="36" r="12" fill="#0a5cab" />
      </Icon>
    ),
  },
  {
    name: "Notepad",
    running: true,
    icon: (
      <Icon w={54} h={72}>
        <path d="M0 62H54V69Q54 72 51 72H3Q0 72 0 69Z" fill="#b4560f" />
        <path d="M0 56H54V65H0Z" fill="#f2f2f2" />
        <path d="M0 6Q0 4 2 4H52Q54 4 54 6V60H0Z" fill="#5cc6e4" />
        <path d="M8.500 3V6M20.500 3V6M32.500 3V6M44.500 3V6" stroke="#03678f" strokeWidth="6" strokeLinecap="round" />
        <path d="M11 22.500H43M11 34.500H43M11 46.500H43" stroke="#03678f" strokeWidth="5" strokeLinecap="round" />
      </Icon>
    ),
  },
  {
    name: "Excel",
    running: true,
    icon: (
      <Icon w={70} h={64}>
        <path d="M16 3Q16 0 19 0H43V17H16Z" fill="#21a366" />
        <path d="M43 0H67Q70 0 70 3V17H43Z" fill="#33c481" />
        <path d="M16 17H43V32H16Z" fill="#107c41" />
        <path d="M43 17H70V32H43Z" fill="#21a366" />
        <path d="M43 32H70V47H43Z" fill="#107c41" />
        <path d="M16 32H43V47H70V60Q70 63 67 63H19Q16 63 16 60Z" fill="#185c37" />
        <rect y="14" width="36" height="36" rx="3" fill="#117a41" />
        <path d="M11 23L25 41M25 23L11 41" stroke="#fff" strokeWidth="4" />
      </Icon>
    ),
  },
  {
    name: "Remote Desktop",
    running: true,
    icon: (
      <Icon w={66} h={68}>
        <defs>
          <linearGradient id="rdp" x1="0" y1="0.3" x2="1" y2="0.6">
            <stop offset="0" stopColor="#0a12a8" />
            <stop offset="0.4" stopColor="#1030d8" />
            <stop offset="1" stopColor="#a8bcf8" />
          </linearGradient>
        </defs>
        <ellipse cx="21" cy="46" rx="11" ry="8" fill="#c4c6c8" />
        <path d="M5 0L50 6L43 42L0 35Z" fill="#c2c4c9" />
        <path d="M8 3L46 8L40 38L4 32Z" fill="url(#rdp)" />
        <circle cx="48" cy="50" r="17" fill="#e4e4e4" stroke="#a9a9a9" />
        <path d="M39 48L46 53L39 60M57 41L50 47L57 53" stroke="#3dae2b" strokeWidth="5" />
      </Icon>
    ),
  },
  {
    name: "Visual Studio Code",
    running: true,
    icon: (
      <svg width="72" height="72" viewBox="0 0 100 100" aria-hidden="true" className="shrink-0">
        <path
          fill="#0070b8"
          d="M96.460 10.800L75.860.880C73.470-.270 70.620.210 68.750 2.080L1.300 63.580C-.520 65.240-.510 68.090 1.300 69.750L6.810 74.750C8.300 76.100 10.530 76.200 12.130 74.990L93.360 13.370C96.090 11.300 100 13.250 100 16.670V16.430C100 14.030 98.620 11.840 96.460 10.800Z"
        />
        <path
          fill="#0a86d6"
          d="M96.460 89.200L75.860 99.120C73.470 100.270 70.620 99.790 68.750 97.920L1.300 36.420C-.520 34.760-.510 31.910 1.300 30.250L6.810 25.250C8.300 23.900 10.530 23.800 12.130 25.010L93.360 86.630C96.090 88.700 100 86.750 100 83.330V83.570C100 85.970 98.620 88.160 96.460 89.200Z"
        />
        <path
          fill="#1f9cf0"
          d="M75.860 99.130C73.470 100.270 70.620 99.790 68.750 97.920C71.060 100.220 75 98.590 75 95.330V4.670C75 1.410 71.060-.220 68.750 2.080C70.620.210 73.470-.270 75.860.870L96.460 10.780C98.620 11.820 100 14.010 100 16.410V83.590C100 85.990 98.620 88.180 96.460 89.220Z"
        />
      </svg>
    ),
  },
];

function HostTaskbar() {
  const ink = "#1b1b1b";
  return (
    <footer className="flex h-[141px] items-center bg-[linear-gradient(90deg,#e6dbdb_0%,#e0dcdc_3%,#dddde4_6%,#d6dce8_10%,#dadce8_24%,#dfdce0_32%,#e6dbda_44%,#e4d9dd_54%,#dbdce0_62%,#dadce6_70%,#dcdbe5_86%,#dadbdf_100%)]">
      <div className="w-[915px] shrink-0 pb-5 pl-[63px]">
        <button aria-label="Weather" className="relative block h-[84px] w-[93px]">
          <Icon w={68} h={84}>
            <defs>
              <linearGradient id="moon" x1="0" y1="0" x2="0" y2="1">
                <stop offset="0" stopColor="#f2cf4a" />
                <stop offset="0.4" stopColor="#efb52c" />
                <stop offset="1" stopColor="#ee7716" />
              </linearGradient>
            </defs>
            <path
              d="M43 20Q43 16 47 18C60 24 66 36 66 49C66 69 51 84 32 84C18 84 7 76 1 63Q-1 59 3 60C25 65 45 51 44 31Q44 25 43 20Z"
              fill="url(#moon)"
            />
          </Icon>
          <span className="absolute top-0 right-0 flex h-[48px] w-[72px] items-center justify-center rounded-full bg-[#fafafa]/85 text-[32px] leading-[48px]">
            -1°
          </span>
        </button>
      </div>
      <nav className="flex h-full shrink-0">
        {hostApps.map((a) => (
          <button
            key={a.name}
            aria-label={a.name}
            className="relative flex h-full w-[132px] items-center justify-center pb-[3px]"
          >
            {a.icon}
            {a.running && (
              <span className="absolute bottom-[15px] left-[57px] h-[9px] w-[18px] rounded-full bg-[#7f7c7e]" />
            )}
          </button>
        ))}
      </nav>
      <div className="ml-auto flex items-center pr-[63px] pb-[3px]">
        <button aria-label="Show hidden icons">
          <Icon w={32} h={20}>
            <path d="M2 17L16 3L30 17" stroke={ink} strokeWidth="4" strokeLinecap="round" />
          </Icon>
        </button>
        <Icon w={48} h={48} className="ml-[56px]">
          <path d="M1.500 25C1 12 10 2 23 2C32 2 39 6 43 13M44 1V14H31M24 47C15 46 9 42 6 36M4.500 48V35H18" stroke="#000" strokeWidth="3" />
          <circle cx="36" cy="36" r="12" fill="#ff9b05" />
        </Icon>
        <Icon w={48} h={34} className="ml-[48px]">
          <path d="M2 14Q24 -11 46 14M8 20Q24 2 40 20M14 26Q24 15 34 26" stroke={ink} strokeWidth="3" strokeLinecap="round" />
          <circle cx="24" cy="30" r="4" fill={ink} />
        </Icon>
        <Icon w={48} h={40} className="ml-[24px]">
          <path d="M8 13H4Q1.500 13 1.500 16V24Q1.500 28 4 28H8L20 35V5L8 13Z" stroke={ink} strokeWidth="3" strokeLinejoin="round" />
          <path d="M26 12Q32 20 26 29" stroke={ink} strokeWidth="3" />
          <path d="M32 7Q42 20 32 34M38 2Q54 20 38 38" stroke="#b5b4bb" strokeWidth="3" />
        </Icon>
        <Icon w={48} h={39} className="ml-[24px]">
          <path d="M20 10.500H37Q41.500 10.500 41.500 15V32Q41.500 37.500 37 37.500H7Q1.500 37.500 1.500 32V24" stroke={ink} strokeWidth="3" />
          <path d="M43 19H46Q48 19 48 22V26Q48 29 46 29H43ZM18 15H37V34H5V27Q16 25 18 15Z" fill={ink} />
          <path d="M9 -1L1 15H7L5 25L16 9H10Z" fill={ink} />
        </Icon>
        <button className="ml-[52px] text-right text-[34px] leading-[48px]">
          10:56 PM
          <br />
          11/13/2024
        </button>
        <button aria-label="Do not disturb" className="ml-[26px]">
          <Icon w={40} h={45}>
            <path d="M0 35L4 25V18Q5 1 18 1Q24 1 27 4V14H33V25L38 35Q38 36 36 36H2Q0 36 0 35ZM11 39H25Q24 45 18 45T11 39Z" fill={ink} />
            <path d="M14 15H24L14 24H25" stroke="#dcdbe1" strokeWidth="3" />
            <path d="M28 2H38L28 14H39" stroke={ink} strokeWidth="3" />
          </Icon>
        </button>
      </div>
    </footer>
  );
}

export default function App() {
  return (
    <div className={`flex min-h-screen flex-col bg-[#f7f7f7] text-black ${UI}`}>
      <TitleBar />
      <MenuBar />
      <VmTabs />
      <section className="flex flex-1 flex-col border-x border-[#68696b]">
        <BrowserTabs />
        <BrowserToolbar />
        <WebPage />
        <GuestTaskbar />
      </section>
      <StatusBar />
      <HostTaskbar />
    </div>
  );
}
